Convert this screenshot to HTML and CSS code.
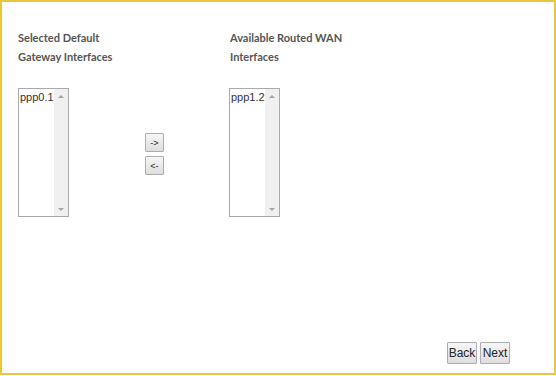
FILE: index.html
```html
<!DOCTYPE html>
<html lang="en">

<head>
    <meta charset="UTF-8">
    <title>Default Gateway</title>
    <link rel="stylesheet" href="styles.css">
</head>

<body>
    <div class="frame">
        <div class="labels">
            <div class="label left">Selected Default<br>Gateway Interfaces</div>
            <div class="label">Available Routed WAN<br>Interfaces</div>
        </div>

        <div class="lists">
            <!-- lista da esquerda -->
            <div class="listbox">
                <div class="items">ppp0.1</div>
                <div class="scroll">
                    <span class="arrow up"></span>
                    <span class="arrow down"></span>
                </div>
            </div>

            <div class="moves">
                <button class="small">-&gt;</button>
                <button class="small">&lt;-</button>
            </div>

            <!-- lista da direita -->
            <div class="listbox">
                <div class="items">ppp1.2</div>
                <div class="scroll">
                    <span class="arrow up"></span>
                    <span class="arrow down"></span>
                </div>
            </div>
        </div>

        <div class="nav">
            <button class="btn">Back</button>
            <button class="btn">Next</button>
        </div>
    </div>
</body>

</html>
```

FILE: styles.css
```css
html,
body {
    margin: 0;
    background: #fff;
}

.frame {
    box-sizing: border-box;
    width: 556px;
    height: 375px;
    border: 2px solid #e8c73f;
    padding: 0 0 0 16px;
    position: relative;
}

.labels {
    display: flex;
    padding-top: 26px;
}

.label {
    font-family: Lato, "Open Sans", Arial, sans-serif;
    font-weight: bold;
    font-size: 11px;
    line-height: 19px;
    color: #555;
}

.label.left {
    width: 212px;
}

.lists {
    display: flex;
    margin-top: 22px;
}

.listbox {
    display: flex;
    box-sizing: border-box;
    width: 51px;
    height: 129px;
    border: 1px solid #aaa;
    background: #fff;
}

.items {
    flex: 1;
    font-family: Arial, sans-serif;
    font-size: 11px;
    color: #333;
    padding: 2px 0 0 1px;
    line-height: 13px;
}

.scroll {
    width: 17px;
    background: #f0f0f0;
    display: flex;
    flex-direction: column;
    justify-content: space-between;
    align-items: center;
    padding: 6px 0 5px;
}

.arrow {
    width: 0;
    height: 0;
    border-left: 3px solid transparent;
    border-right: 3px solid transparent;
}

.arrow.up {
    border-bottom: 3px solid #a3a3a3;
}

.arrow.down {
    border-top: 3px solid #a3a3a3;
}

.moves {
    display: flex;
    flex-direction: column;
    gap: 4px;
    margin: 45px 65px 0 76px;
}

button {
    font-family: Arial, sans-serif;
    color: #222;
    border: 1px solid #adadad;
    border-radius: 1px;
    background: linear-gradient(#f6f6f6, #dedede);
    cursor: pointer;
}

.small {
    width: 19px;
    height: 19px;
    padding: 0;
    font-size: 9px;
}

.nav {
    position: absolute;
    right: 44px;
    top: 340px;
    display: flex;
    gap: 3px;
}

.btn {
    width: 30px;
    height: 22px;
    padding: 0;
    font-size: 12px;
}
```
